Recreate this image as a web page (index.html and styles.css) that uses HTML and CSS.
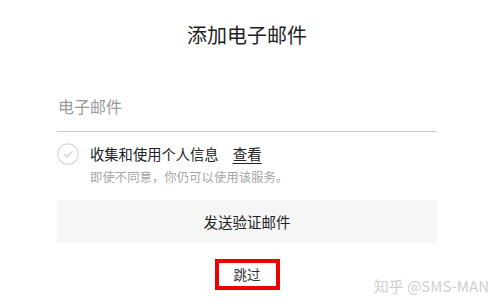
FILE: index.html
```html
<!DOCTYPE html>
<html lang="zh-CN">
<head>
<meta charset="utf-8">
<title>添加电子邮件</title>
<link rel="stylesheet" href="styles.css">
</head>
<body>
<div class="page">
  <h1 class="title">添加电子邮件</h1>
  <div class="field"><span class="placeholder">电子邮件</span></div>
  <div class="consent">
    <svg class="check" width="22" height="22" viewBox="0 0 22 22">
      <circle cx="11" cy="11" r="10.2" fill="none" stroke="#d9d9d9" stroke-width="1.2"/>
      <path d="M7.3 11.4 L10 14 L15 8.6" fill="none" stroke="#cfcfcf" stroke-width="1.2" stroke-linecap="round" stroke-linejoin="round"/>
    </svg>
    <span class="consent-text">收集和使用个人信息</span>
    <a class="view">查看</a>
  </div>
  <p class="note">即使不同意，你仍可以使用该服务。</p>
  <div class="send">发送验证邮件</div>
  <div class="skip-wrap"><span class="skip">跳过</span></div>
</div>
<div class="watermark">知乎 @SMS-MAN</div>
</body>
</html>
```
FILE: styles.css
```css
html, body {
  margin: 0;
  background: #fff;
}
body {
  font-family: "Noto Sans CJK SC", "Noto Sans", sans-serif;
  color: #222;
  width: 501px;
  height: 308px;
  position: relative;
  overflow: hidden;
}
.page {
  padding: 0 64px 0 57px;
  width: 380px;
}
.title {
  margin: 0;
  padding-top: 20px;
  font-size: 20px;
  line-height: 30px;
  font-weight: 400;
  text-align: center;
  color: #222;
}
.field {
  margin-top: 45px;
  height: 22px;
  padding-bottom: 14px;
  border-bottom: 1px solid #c9c9c9;
  display: flex;
  align-items: center;
}
.placeholder {
  font-size: 16px;
  line-height: 22px;
  color: #9a9a9a;
  padding-left: 1px;
}
.consent {
  margin-top: 11px;
  height: 22px;
  display: flex;
  align-items: center;
}
.check {
  display: block;
  flex: none;
}
.consent-text {
  margin-left: 11px;
  font-size: 14.3px;
  line-height: 22px;
  color: #222;
}
.view {
  margin-left: 14px;
  font-size: 14.5px;
  line-height: 22px;
  color: #222;
  text-decoration: underline;
  text-underline-offset: 3px;
  text-decoration-thickness: 1px;
}
.note {
  margin: 4px 0 0 33px;
  font-size: 12.4px;
  line-height: 16px;
  color: #a6a6a6;
}
.send {
  margin-top: 15px;
  height: 43px;
  background: #f6f6f6;
  border-radius: 2px;
  display: flex;
  align-items: center;
  justify-content: center;
  font-size: 14.5px;
  color: #222;
}
.skip-wrap {
  margin-top: 16px;
  display: flex;
  justify-content: center;
}
.skip {
  display: block;
  width: 57px;
  height: 23px;
  border: 4px solid #ee0000;
  text-align: center;
  font-size: 13.5px;
  line-height: 23px;
  color: #333;
}
.watermark {
  position: absolute;
  right: 12px;
  top: 276px;
  font-size: 15px;
  line-height: 20px;
  color: #cfcfcf;
  font-family: "Noto Sans CJK SC", "Noto Sans", sans-serif;
}
```
